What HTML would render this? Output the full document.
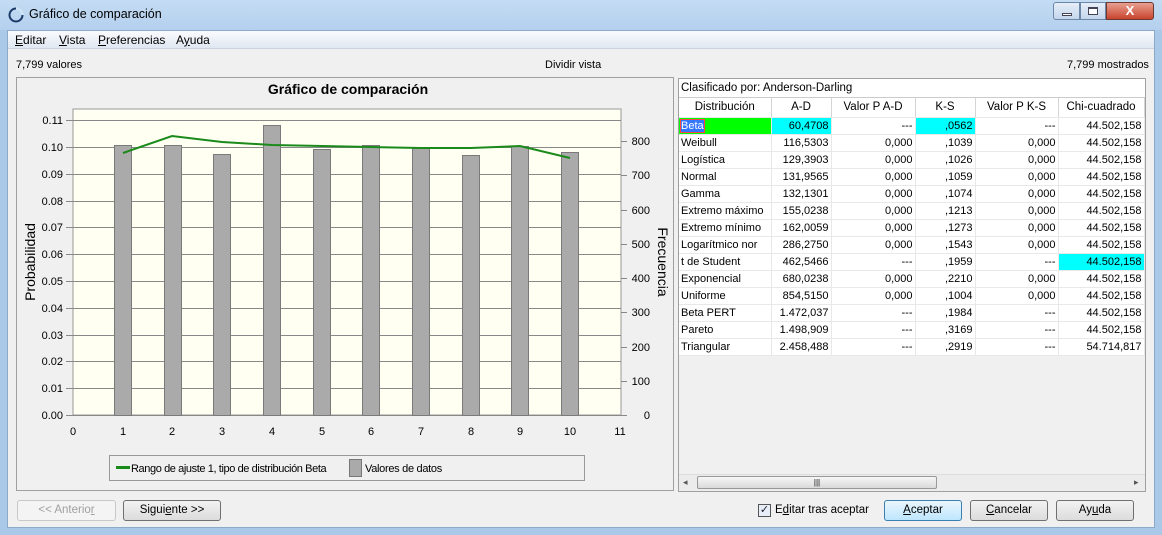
<!DOCTYPE html>
<html><head><meta charset="utf-8"><style>
*{margin:0;padding:0;box-sizing:border-box}
body{width:1162px;height:535px;overflow:hidden;background:#aac8e8;font-family:"Liberation Sans",sans-serif;font-size:11px;color:#000;position:relative}
.abs{position:absolute}
.title{left:0;top:0;width:1162px;height:30px;background:linear-gradient(#c4dcf3,#b4d0ee);}
.win{left:7px;top:30px;width:1148px;height:498px;background:#f0f0f0;border:1px solid #8ea8c8}
.menu{left:8px;top:31px;width:1146px;height:18px;background:linear-gradient(#fafbfd,#dfe7f2);border-bottom:1px solid #c8d2e0}
.menu span{position:absolute;top:2px;font-size:12px}
.btn{position:absolute;height:21px;border:1px solid #707070;border-radius:3px;background:linear-gradient(#f2f2f2,#dcdcdc);text-align:center;line-height:19px;font-size:11.5px}
table{border-collapse:collapse;font-size:11px}
td{height:17px;border-right:1px solid #e8e8e8;border-bottom:1px solid #e8e8e8;padding:0 2px;text-align:right;white-space:nowrap;overflow:hidden}
td:first-child{text-align:left}
.hd td{height:19px;text-align:center;background:#fff;border-right:1px solid #d5d5d5;font-size:11.5px}
</style></head><body>
<div class="abs title"></div>
<svg class="abs" style="left:8px;top:7px" width="16" height="16"><circle cx="8" cy="8" r="6.5" fill="none" stroke="#1a3a6a" stroke-width="2"/><path d="M8 1.5 A6.5 6.5 0 0 1 14.5 8" stroke="#cfe3f7" stroke-width="2.5" fill="none"/></svg>
<div class="abs" style="left:29px;top:7px;font-size:12.5px">Gráfico de comparación</div>
<div class="abs" style="left:1053px;top:2px;width:27px;height:18px;border:1px solid #6d87a8;border-radius:3px 0 0 3px;background:linear-gradient(#e6eef8,#c4d6ec)"><div class="abs" style="left:8px;top:10px;width:10px;height:3px;background:#fff;border:1px solid #445"></div></div>
<div class="abs" style="left:1080px;top:2px;width:26px;height:18px;border:1px solid #6d87a8;background:linear-gradient(#e6eef8,#c4d6ec)"><div class="abs" style="left:7px;top:4px;width:10px;height:8px;border:1px solid #445;border-top-width:2px;background:#fff"></div></div>
<div class="abs" style="left:1106px;top:2px;width:48px;height:18px;border:1px solid #6d3a30;border-radius:0 3px 3px 0;background:linear-gradient(#e8a090,#c8442e);color:#fff;font-weight:bold;text-align:center;line-height:16px;font-size:13px">X</div>
<div class="abs win"></div>
<div class="abs menu"><span style="left:7px"><u>E</u>ditar</span><span style="left:51px"><u>V</u>ista</span><span style="left:90px"><u>P</u>referencias</span><span style="left:168px">A<u>y</u>uda</span></div>
<div class="abs" style="left:16px;top:59px">7,799 valores</div>
<div class="abs" style="left:545px;top:59px">Dividir vista</div>
<div class="abs" style="left:1067px;top:59px">7,799 mostrados</div>

<div class="abs" style="left:16px;top:77px;width:658px;height:414px;border:1px solid #a0a0a0;background:#f0f0f0"></div>
<svg class="abs" style="left:0;top:0" width="680" height="500" font-family="Liberation Sans, sans-serif" font-size="11">
<text x="348" y="94" font-size="14" font-weight="bold" text-anchor="middle">Gráfico de comparación</text>
<rect x="73" y="109" width="548" height="306" fill="#fffff2" stroke="#999"/>
<g stroke="#888" stroke-width="1">
<line x1="66" y1="120.5" x2="621" y2="120.5"/><line x1="66" y1="147.5" x2="621" y2="147.5"/><line x1="66" y1="174.5" x2="621" y2="174.5"/><line x1="66" y1="201.5" x2="621" y2="201.5"/><line x1="66" y1="227.5" x2="621" y2="227.5"/><line x1="66" y1="254.5" x2="621" y2="254.5"/><line x1="66" y1="281.5" x2="621" y2="281.5"/><line x1="66" y1="308.5" x2="621" y2="308.5"/><line x1="66" y1="335.5" x2="621" y2="335.5"/><line x1="66" y1="361.5" x2="621" y2="361.5"/><line x1="66" y1="388.5" x2="621" y2="388.5"/><line x1="66" y1="415.5" x2="621" y2="415.5"/>
<line x1="621" y1="141.5" x2="627" y2="141.5"/><line x1="621" y1="175.5" x2="627" y2="175.5"/><line x1="621" y1="210.5" x2="627" y2="210.5"/><line x1="621" y1="244.5" x2="627" y2="244.5"/><line x1="621" y1="278.5" x2="627" y2="278.5"/><line x1="621" y1="312.5" x2="627" y2="312.5"/><line x1="621" y1="347.5" x2="627" y2="347.5"/><line x1="621" y1="381.5" x2="627" y2="381.5"/><line x1="621" y1="415.5" x2="627" y2="415.5"/>
</g>
<g fill="#aaaaaa" stroke="#7a7a7a">
<rect x="114.5" y="145.5" width="17" height="270"/><rect x="164.5" y="145.5" width="17" height="270"/><rect x="213.5" y="154.5" width="17" height="261"/><rect x="263.5" y="125.5" width="17" height="290"/><rect x="313.5" y="149.5" width="17" height="266"/><rect x="362.5" y="145.5" width="17" height="270"/><rect x="412.5" y="148.5" width="17" height="267"/><rect x="462.5" y="155.5" width="17" height="260"/><rect x="511.5" y="146.5" width="17" height="269"/><rect x="561.5" y="152.5" width="17" height="263"/>
</g>
<polyline points="123,153 172,136 222,142 272,145 322,146 371,147 421,148 471,148 520,146 570,158" fill="none" stroke="#1a8a1a" stroke-width="2"/>
<g text-anchor="end"><text x="63" y="124">0.11</text><text x="63" y="151">0.10</text><text x="63" y="178">0.09</text><text x="63" y="205">0.08</text><text x="63" y="231">0.07</text><text x="63" y="258">0.06</text><text x="63" y="285">0.05</text><text x="63" y="312">0.04</text><text x="63" y="339">0.03</text><text x="63" y="365">0.02</text><text x="63" y="392">0.01</text><text x="63" y="419">0.00</text></g>
<g text-anchor="end"><text x="650" y="145">800</text><text x="650" y="179">700</text><text x="650" y="214">600</text><text x="650" y="248">500</text><text x="650" y="282">400</text><text x="650" y="316">300</text><text x="650" y="351">200</text><text x="650" y="385">100</text><text x="650" y="419">0</text></g>
<g text-anchor="middle"><text x="73" y="435">0</text><text x="123" y="435">1</text><text x="172" y="435">2</text><text x="222" y="435">3</text><text x="272" y="435">4</text><text x="322" y="435">5</text><text x="371" y="435">6</text><text x="421" y="435">7</text><text x="471" y="435">8</text><text x="520" y="435">9</text><text x="570" y="435">10</text><text x="620" y="435">11</text></g>
<text transform="translate(35,262) rotate(-90)" font-size="14" text-anchor="middle">Probabilidad</text>
<text transform="translate(658,262) rotate(90)" font-size="14" text-anchor="middle">Frecuencia</text>
<rect x="109.5" y="455.5" width="475" height="25" fill="#f0f0f0" stroke="#999"/>
<rect x="116" y="466" width="14" height="3" fill="#1a8a1a"/>
<text x="131" y="472" font-size="11" letter-spacing="-0.4">Rango de ajuste 1, tipo de distribución Beta</text>
<rect x="349.5" y="459.5" width="12" height="17" fill="#aaa" stroke="#777"/>
<text x="365" y="472" font-size="11" letter-spacing="-0.3">Valores de datos</text>
</svg>

<div class="abs" style="left:678px;top:78px;width:468px;height:414px;border:1px solid #a0a0a0;background:#f0f0f0;overflow:hidden">
<div style="height:19px;background:#fff;border-bottom:1px solid #ccc;padding:3px 2px;font-size:11.5px;width:466px">Clasificado por: Anderson-Darling</div>
<table style="background:#fff;width:465px;table-layout:fixed">
<colgroup><col style="width:92px"><col style="width:60px"><col style="width:84px"><col style="width:60px"><col style="width:83px"><col style="width:86px"></colgroup>
<tr class="hd"><td style="text-align:center">Distribución</td><td style="text-align:center">A-D</td><td style="text-align:center">Valor P A-D</td><td style="text-align:center">K-S</td><td style="text-align:center">Valor P K-S</td><td style="text-align:center">Chi-cuadrado</td></tr>
<tr><td style="background:#00ff00"><span style="background:#3377ff;color:#fff;outline:1px solid #f44">Beta</span></td><td style="background:#00ffff">60,4708</td><td>---</td><td style="background:#00ffff">,0562</td><td>---</td><td>44.502,158</td></tr>
<tr><td>Weibull</td><td>116,5303</td><td>0,000</td><td>,1039</td><td>0,000</td><td>44.502,158</td></tr>
<tr><td>Logística</td><td>129,3903</td><td>0,000</td><td>,1026</td><td>0,000</td><td>44.502,158</td></tr>
<tr><td>Normal</td><td>131,9565</td><td>0,000</td><td>,1059</td><td>0,000</td><td>44.502,158</td></tr>
<tr><td>Gamma</td><td>132,1301</td><td>0,000</td><td>,1074</td><td>0,000</td><td>44.502,158</td></tr>
<tr><td>Extremo máximo</td><td>155,0238</td><td>0,000</td><td>,1213</td><td>0,000</td><td>44.502,158</td></tr>
<tr><td>Extremo mínimo</td><td>162,0059</td><td>0,000</td><td>,1273</td><td>0,000</td><td>44.502,158</td></tr>
<tr><td>Logarítmico nor</td><td>286,2750</td><td>0,000</td><td>,1543</td><td>0,000</td><td>44.502,158</td></tr>
<tr><td>t de Student</td><td>462,5466</td><td>---</td><td>,1959</td><td>---</td><td style="background:#00ffff">44.502,158</td></tr>
<tr><td>Exponencial</td><td>680,0238</td><td>0,000</td><td>,2210</td><td>0,000</td><td>44.502,158</td></tr>
<tr><td>Uniforme</td><td>854,5150</td><td>0,000</td><td>,1004</td><td>0,000</td><td>44.502,158</td></tr>
<tr><td>Beta PERT</td><td>1.472,037</td><td>---</td><td>,1984</td><td>---</td><td>44.502,158</td></tr>
<tr><td>Pareto</td><td>1.498,909</td><td>---</td><td>,3169</td><td>---</td><td>44.502,158</td></tr>
<tr><td>Triangular</td><td>2.458,488</td><td>---</td><td>,2919</td><td>---</td><td>54.714,817</td></tr>
</table>
<div class="abs" style="left:0;top:395px;width:466px;height:17px;background:#ececec;border-top:1px solid #ddd"></div>
<div class="abs" style="left:18px;top:397px;width:240px;height:13px;border:1px solid #999;border-radius:2px;background:linear-gradient(#f6f6f6,#dadada);text-align:center;font-size:8px;line-height:11px">|||</div>
<div class="abs" style="left:4px;top:398px;font-size:9px;color:#555">◂</div>
<div class="abs" style="left:455px;top:398px;font-size:9px;color:#555">▸</div>
</div>

<div class="btn" style="left:17px;top:500px;width:99px;color:#a0a0a0;border-color:#c8c8c8;background:#f4f4f4">&lt;&lt; Anterio<u>r</u></div>
<div class="btn" style="left:123px;top:500px;width:98px">Sigui<u>e</u>nte &gt;&gt;</div>
<div class="abs" style="left:758px;top:504px;width:13px;height:13px;border:1px solid #555;background:#e8eef8;font-size:11px;line-height:11px;text-align:center;color:#223">✓</div>
<div class="abs" style="left:775px;top:504px;font-size:11.5px">E<u>d</u>itar tras aceptar</div>
<div class="btn" style="left:884px;top:500px;width:78px;border-color:#3c7fb1;background:linear-gradient(#eaf6fd,#bee6fd)"><u>A</u>ceptar</div>
<div class="btn" style="left:970px;top:500px;width:78px"><u>C</u>ancelar</div>
<div class="btn" style="left:1056px;top:500px;width:78px">Ay<u>u</u>da</div>
</body></html>
